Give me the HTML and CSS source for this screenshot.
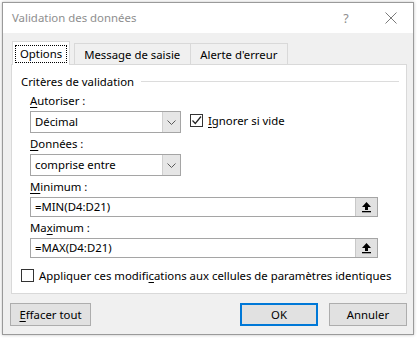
FILE: index.html
```html
<!DOCTYPE html>
<html lang="fr">
<head>
<meta charset="utf-8">
<link rel="stylesheet" href="styles.css">
</head>
<body>
<div class="dialog">
  <div class="titlebar">
    <span class="title">Validation des données</span>
    <span class="help">?</span>
    <svg class="close" width="12" height="12" viewBox="0 0 12 12"><path d="M0.5 0.5 L11.5 11.5 M11.5 0.5 L0.5 11.5" stroke="#7a7a7a" stroke-width="1" fill="none"/></svg>
  </div>
  <div class="tabs">
    <div class="tab active"><span class="focus">Options</span></div>
    <div class="tab">Message de saisie</div>
    <div class="tab">Alerte d'erreur</div>
  </div>
  <div class="panel">
    <div class="group-head"><span>Critères de validation</span><span class="rule"></span></div>
    <div class="field first">
      <div class="label"><u>A</u>utoriser :</div>
      <div class="row">
        <div class="select"><span class="val">Décimal</span><span class="drop"><svg width="9" height="5" viewBox="0 0 9 5"><path d="M0.5 0.5 L4.5 4.5 L8.5 0.5" stroke="#5a5a5a" fill="none"/></svg></span></div>
        <div class="check checked">
          <span class="box"><svg width="11" height="11" viewBox="0 0 11 11"><path d="M1.5 5.5 L4.3 8.5 L10 1.5" stroke="#222" stroke-width="1.2" fill="none"/></svg></span>
          <span><u>I</u>gnorer si vide</span>
        </div>
      </div>
    </div>
    <div class="field second">
      <div class="label"><u>D</u>onnées :</div>
      <div class="select"><span class="val">comprise entre</span><span class="drop"><svg width="9" height="5" viewBox="0 0 9 5"><path d="M0.5 0.5 L4.5 4.5 L8.5 0.5" stroke="#5a5a5a" fill="none"/></svg></span></div>
    </div>
    <div class="field">
      <div class="label"><u>M</u>inimum :</div>
      <div class="input"><span class="val">=MIN(D4:D21)</span><span class="ref"><svg width="11" height="12" viewBox="0 0 11 12"><path d="M5.5 1 L10 6 L7 6 L7 9 L4 9 L4 6 L1 6 Z" fill="#000"/><rect x="1" y="10" width="9" height="1.3" fill="#000"/></svg></span></div>
    </div>
    <div class="field">
      <div class="label">Ma<u>x</u>imum :</div>
      <div class="input"><span class="val">=MAX(D4:D21)</span><span class="ref"><svg width="11" height="12" viewBox="0 0 11 12"><path d="M5.5 1 L10 6 L7 6 L7 9 L4 9 L4 6 L1 6 Z" fill="#000"/><rect x="1" y="10" width="9" height="1.3" fill="#000"/></svg></span></div>
    </div>
    <div class="check apply">
      <span class="box"></span>
      <span>Appliquer ces modifi<u>c</u>ations aux cellules de paramètres identiques</span>
    </div>
  </div>
  <div class="footer">
    <button class="btn"><u>E</u>ffacer tout</button>
    <span class="spacer"></span>
    <button class="btn default">OK</button>
    <button class="btn">Annuler</button>
  </div>
</div>
</body>
</html>
```
FILE: styles.css
```css
html, body {
  margin: 0;
  padding: 0;
}
body {
  width: 417px;
  height: 339px;
  overflow: hidden;
  background: #ffffff;
  font-family: "Noto Sans", "Open Sans", sans-serif;
  font-size: 11.35px;
  color: #000;
}
.dialog {
  box-sizing: border-box;
  margin: 2px 0 0 2px;
  width: 412px;
  height: 333px;
  border: 1px solid #9a9a9a;
  background: #f0f0f0;
  box-shadow: 0 0 3px rgba(0,0,0,0.25);
  display: flex;
  flex-direction: column;
}
.titlebar {
  height: 30px;
  background: #fff;
  display: flex;
  align-items: center;
  padding-left: 9px;
  flex: none;
}
.title {
  flex: 1;
  color: #8e8e8e;
  font-size: 11.4px;
  padding-bottom: 1px;
}
.help {
  color: #8e8e8e;
  font-size: 12.5px;
  width: 20px;
  margin-right: 29px;
  text-align: center;
}
.close {
  margin-right: 16px;
}
.tabs {
  display: flex;
  align-items: flex-end;
  padding-left: 9px;
  margin-top: 8px;
  height: 23px;
  flex: none;
  position: relative;
  z-index: 1;
  white-space: nowrap;
}
.tab {
  box-sizing: border-box;
  height: 21px;
  border: 1px solid #d9d9d9;
  border-bottom: none;
  padding: 0 10px 0 9px;
  display: flex;
  align-items: center;
  background: #f0f0f0;
  margin-left: -1px;
}
.tab.active {
  height: 24px;
  margin-bottom: -1px;
  background: #fff;
  margin-left: 0;
  padding: 0 2px;
  margin-right: 5px;
}
.focus {
  border: 1px dotted #000;
  padding: 0 4px;
  line-height: 16px;
}
.panel {
  box-sizing: border-box;
  margin: 0 6px 0 8px;
  height: 230px;
  background: #fff;
  border: 1px solid #d9d9d9;
  padding: 7px 0 0 9px;
  flex: none;
}
.group-head {
  display: flex;
  align-items: center;
  gap: 7px;
  padding-right: 7px;
  height: 18px;
}
.rule {
  flex: 1;
  height: 1px;
  background: #dcdcdc;
}
.field {
  padding-left: 9px;
}
.label {
  line-height: 16px;
  margin-top: 3px;
}
.field.first .label {
  margin-top: 3px;
}
.field.second .label {
  margin-top: 3px;
}
.row {
  display: flex;
  align-items: center;
  gap: 9px;
}
.select {
  box-sizing: border-box;
  width: 151px;
  height: 22px;
  border: 1px solid #a5a5a5;
  display: flex;
  margin-top: 2px;
}
.val {
  flex: 1;
  padding-left: 4px;
  line-height: 20px;
}
.input .val {
  line-height: 18px;
}
.drop {
  width: 17px;
  background: #e6e6e6;
  border-left: 1px solid #cfcfcf;
  display: flex;
  align-items: center;
  justify-content: center;
}
.check {
  display: flex;
  align-items: center;
  gap: 5px;
  white-space: nowrap;
}
.row .check {
  margin-top: -1px;
}
.box {
  box-sizing: border-box;
  width: 13px;
  height: 13px;
  border: 1px solid #333;
  background: #fff;
  display: flex;
  align-items: center;
  justify-content: center;
}
.input {
  box-sizing: border-box;
  width: 348px;
  height: 20px;
  border: 1px solid #a5a5a5;
  display: flex;
  margin-top: 2px;
}
.ref {
  width: 21px;
  background: #e1e1e1;
  border-left: 1px solid #c8c8c8;
  display: flex;
  align-items: center;
  justify-content: center;
}
.apply {
  margin-top: 10px;
}
.footer {
  display: flex;
  align-items: center;
  padding: 0 6px 0 7px;
  gap: 11px;
  margin-top: 9px;
}
.spacer {
  flex: 1;
}
.btn {
  box-sizing: border-box;
  width: 78px;
  height: 23px;
  font-family: inherit;
  font-size: 11.35px;
  color: #000;
  background: #e1e1e1;
  border: 1px solid #adadad;
  padding: 0;
}
.btn:first-child {
  width: 81px;
}
.btn.default {
  border: 2px solid #0078d7;
}
u {
  text-decoration: underline;
  text-underline-offset: 2px;
}
```
